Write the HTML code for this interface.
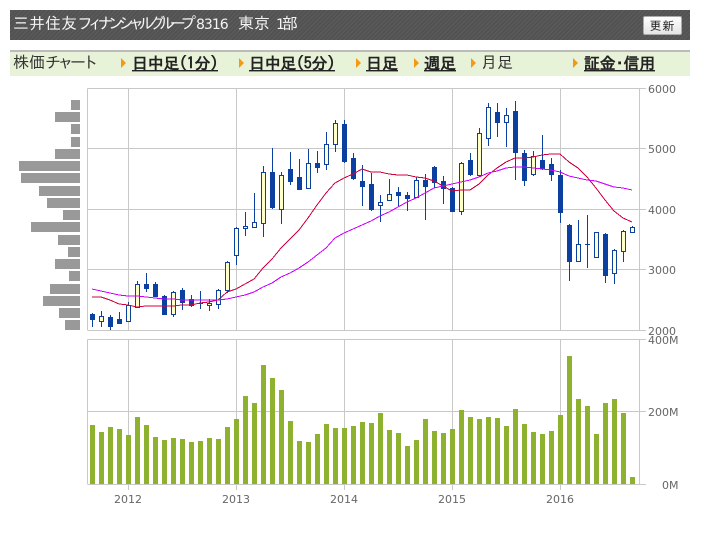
<!DOCTYPE html>
<html lang="ja"><head><meta charset="utf-8"><style>
html,body{margin:0;padding:0;background:#fff;width:702px;height:533px;overflow:hidden}
#w{position:relative;width:702px;height:533px;font-family:"Liberation Sans","IPAGothic","Noto Sans CJK JP",sans-serif}
.a{position:absolute;white-space:nowrap;line-height:1}
#hd{position:absolute;left:10px;top:10px;width:680px;height:30px;background:repeating-linear-gradient(135deg,#525252 0,#525252 2px,#5c5c5c 2px,#5c5c5c 3px)}
#nv{position:absolute;left:10px;top:50px;width:680px;height:24px;background:#e8f2d8;border-top:2px solid #bbb}
.t{color:#f4f4f4;font-size:16px;top:17px}
.n{color:#333;font-size:16px}
.l{color:#222;font-family:"IPAGothic","Noto Sans CJK JP",sans-serif;font-size:16px;font-weight:bold;top:55px;border-bottom:1px solid #222;box-shadow:0 1px 0 #999;height:15px}
.r{position:absolute;width:0;height:0;border-left:5px solid #f39a12;border-top:5px solid transparent;border-bottom:5px solid transparent;top:58px}
#b{position:absolute;left:643px;top:16px;width:37px;height:17px;border:1px solid #aaa;border-radius:2px;background:linear-gradient(#fff,#e4e4e4);color:#222;font-size:12px;line-height:18px;text-align:center;letter-spacing:1px}
svg{position:absolute;left:0;top:0}
svg text{font-family:"DejaVu Sans",sans-serif;font-size:11px;fill:#666}
</style></head><body><div id="w">
<div id="hd"></div>
<span class="a t" style="left:13px">三井住友</span>
<span class="a t" style="left:77px;letter-spacing:-5.7px">フィナンシャルグループ</span>
<span class="a t" style="left:196px;font-family:'DejaVu Sans',sans-serif;font-size:14px;top:18px;letter-spacing:-1px">8316</span>
<span class="a t" style="left:238px">東京</span>
<span class="a t" style="left:276px;font-family:'DejaVu Sans',sans-serif;font-size:14px;top:18px">1</span>
<span class="a t" style="left:282px">部</span>
<div id="b">更新</div>
<div id="nv"></div>
<span class="a n" style="left:13px;top:56px">株価</span>
<span class="a n" style="left:45px;top:56px;letter-spacing:-3.5px">チャート</span>
<i class="r" style="left:121px"></i><span class="a l" style="left:132px;letter-spacing:-.3px">日中足(1分)</span>
<i class="r" style="left:239px"></i><span class="a l" style="left:249px;letter-spacing:-.3px">日中足(5分)</span>
<i class="r" style="left:356px"></i><span class="a l" style="left:366px">日足</span>
<i class="r" style="left:414px"></i><span class="a l" style="left:424px">週足</span>
<i class="r" style="left:471px"></i><span class="a n" style="left:481px;top:56px">月足</span>
<i class="r" style="left:573px"></i><span class="a l" style="left:584px;letter-spacing:-.2px">証金･信用</span>
<svg id="s" width="702" height="533" viewBox="0 0 702 533" shape-rendering="crispEdges">
<g stroke="#c8c8c8" fill="none" stroke-width="1">
<path d="M87.5 88.5H646M87.5 148.5H646M87.5 209.5H646M87.5 269.5H646M87.5 330.5H646M87.5 88.5V330M128.5 88.5V330M236.5 88.5V330M344.5 88.5V330M452.5 88.5V330M560.5 88.5V330M639.5 88.5V330"/>
<path d="M87.5 339.5H646M87.5 411.5H646M87.5 484.5H646M87.5 339.5V484M128.5 339.5V490M236.5 339.5V490M344.5 339.5V490M452.5 339.5V490M560.5 339.5V490M639.5 339.5V484"/>
</g>
<g fill="#999">
<rect x="71" y="100" width="9" height="10"/><rect x="55" y="112" width="25" height="10"/><rect x="71" y="124" width="9" height="10"/><rect x="71" y="137" width="9" height="10"/><rect x="55" y="149" width="25" height="10"/><rect x="19" y="161" width="61" height="10"/><rect x="21" y="173" width="59" height="10"/><rect x="39" y="186" width="41" height="10"/><rect x="47" y="198" width="33" height="10"/><rect x="63" y="210" width="17" height="10"/><rect x="31" y="222" width="49" height="10"/><rect x="58" y="235" width="22" height="10"/><rect x="68" y="247" width="12" height="10"/><rect x="55" y="259" width="25" height="10"/><rect x="69" y="271" width="11" height="10"/><rect x="50" y="284" width="30" height="10"/><rect x="43" y="296" width="37" height="10"/><rect x="59" y="308" width="21" height="10"/><rect x="65" y="320" width="15" height="10"/>
</g>
<g id="v" fill="#8eb230">
<rect x="90" y="425" width="5" height="59"/><rect x="99" y="432" width="5" height="52"/><rect x="108" y="427" width="5" height="57"/><rect x="117" y="429" width="5" height="55"/><rect x="126" y="435" width="5" height="49"/><rect x="135" y="417" width="5" height="67"/><rect x="144" y="425" width="5" height="59"/><rect x="153" y="437" width="5" height="47"/><rect x="162" y="440" width="5" height="44"/><rect x="171" y="438" width="5" height="46"/><rect x="180" y="439" width="5" height="45"/><rect x="189" y="442" width="5" height="42"/><rect x="198" y="441" width="5" height="43"/><rect x="207" y="438" width="5" height="46"/><rect x="216" y="439" width="5" height="45"/><rect x="225" y="427" width="5" height="57"/><rect x="234" y="419" width="5" height="65"/><rect x="243" y="396" width="5" height="88"/><rect x="252" y="403" width="5" height="81"/><rect x="261" y="365" width="5" height="119"/><rect x="270" y="378" width="5" height="106"/><rect x="279" y="390" width="5" height="94"/><rect x="288" y="421" width="5" height="63"/><rect x="297" y="441" width="5" height="43"/><rect x="306" y="442" width="5" height="42"/><rect x="315" y="434" width="5" height="50"/><rect x="324" y="424" width="5" height="60"/><rect x="333" y="428" width="5" height="56"/><rect x="342" y="428" width="5" height="56"/><rect x="351" y="426" width="5" height="58"/><rect x="360" y="422" width="5" height="62"/><rect x="369" y="423" width="5" height="61"/><rect x="378" y="413" width="5" height="71"/><rect x="387" y="430" width="5" height="54"/><rect x="396" y="433" width="5" height="51"/><rect x="405" y="446" width="5" height="38"/><rect x="414" y="440" width="5" height="44"/><rect x="423" y="419" width="5" height="65"/><rect x="432" y="431" width="5" height="53"/><rect x="441" y="433" width="5" height="51"/><rect x="450" y="429" width="5" height="55"/><rect x="459" y="410" width="5" height="74"/><rect x="468" y="417" width="5" height="67"/><rect x="477" y="419" width="5" height="65"/><rect x="486" y="417" width="5" height="67"/><rect x="495" y="418" width="5" height="66"/><rect x="504" y="426" width="5" height="58"/><rect x="513" y="409" width="5" height="75"/><rect x="522" y="424" width="5" height="60"/><rect x="531" y="432" width="5" height="52"/><rect x="540" y="434" width="5" height="50"/><rect x="549" y="431" width="5" height="53"/><rect x="558" y="415" width="5" height="69"/><rect x="567" y="356" width="5" height="128"/><rect x="576" y="399" width="5" height="85"/><rect x="585" y="406" width="5" height="78"/><rect x="594" y="434" width="5" height="50"/><rect x="603" y="403" width="5" height="81"/><rect x="612" y="399" width="5" height="85"/><rect x="621" y="413" width="5" height="71"/><rect x="630" y="477" width="5" height="7"/>
</g>
<g id="c" fill="none" stroke="#0b3fa0" stroke-width="1"></g>
<g fill="none" stroke-width="1">
<polyline stroke="#d0003c" points="92,297 101,297 110,300 119,304 128,305 137,307 146,306 155,306 164,306 173,306 182,305 191,305 200,303 209,302 218,300 227,292 236,289 245,284 254,279 263,268 272,259 281,248 290,239 299,230 308,218 317,205 326,193 335,183 344,178 353,174 362,169 371,172 380,172 389,174 398,175 407,175 416,177 425,178 434,181 443,186 452,191 461,190 470,190 479,184 488,175 497,168 506,162 515,158 524,158 533,157 542,155 551,154 560,154 569,162 578,168 587,177 596,188 605,200 614,211 623,218 632,222"/>
<polyline stroke="#cc00ff" points="92,289 101,291 110,293 119,295 128,296 137,296 146,297 155,298 164,299 173,299 182,300 191,300 200,300 209,300 218,300 227,299 236,297 245,295 254,292 263,287 272,283 281,277 290,273 299,268 308,262 317,255 326,248 335,238 344,233 353,229 362,225 371,221 380,216 389,212 398,207 407,202 416,198 425,193 434,188 443,186 452,184 461,182 470,180 479,177 488,173 497,171 506,168 515,167 524,167 533,168 542,169 551,170 560,172 569,176 578,178 587,180 596,181 605,184 614,187 623,188 632,190"/>
</g>
<g shape-rendering="auto">
<text x="648" y="93">6000</text><text x="648" y="153">5000</text><text x="648" y="214">4000</text><text x="648" y="274">3000</text><text x="648" y="335">2000</text>
<text x="648" y="344">400M</text><text x="648" y="416">200M</text><text x="662" y="489">0M</text>
<text x="114" y="503">2012</text><text x="222" y="503">2013</text><text x="330" y="503">2014</text><text x="438" y="503">2015</text><text x="546" y="503">2016</text>
</g>
</svg>
<script>
var D=[[0,687,701,684,725],[1,694,709,678,725],[0,696,722,690,734],[0,702,713,681,716],[1,659,709,652,709],[1,598,665,589,668],[0,597,608,564,620],[0,597,632,591,632],[0,633,686,630,689],[1,622,688,618,695],[0,615,650,609,674],[0,642,660,630,665],[2,655,655,618,671],[1,654,661,642,677],[1,616,658,612,671],[1,532,616,529,623],[1,430,511,427,539],[1,424,430,381,452],[1,412,427,324,430],[1,262,415,243,455],[0,261,365,189,371],[1,271,373,262,416],[0,252,287,201,299],[0,276,311,222,314],[1,235,310,192,310],[0,234,245,198,263],[1,178,238,141,254],[1,115,178,105,200],[0,117,227,105,233],[0,219,278,204,284],[0,288,302,240,362],[0,297,371,264,378],[1,352,361,330,410],[1,328,346,282,346],[0,321,329,306,367],[0,330,338,321,377],[1,286,337,276,338],[0,285,302,267,404],[0,246,290,243,309],[0,288,308,273,356],[0,309,377,306,379],[1,235,379,230,389],[0,225,267,204,272],[1,145,271,129,275],[1,67,160,54,183],[0,81,110,54,155],[1,91,112,69,186],[0,78,200,48,285],[0,204,285,195,303],[1,214,268,198,273],[0,225,250,150,255],[0,237,266,219,288],[0,270,380,255,413],[0,420,527,417,588],[1,478,527,405,530],[2,478,478,390,549],[1,442,517,442,517],[0,447,569,444,594],[1,496,565,492,597],[1,439,499,435,531],[1,427,442,423,442]];
var h='',Y=function(z){return Math.round(85+z/3)};
D.forEach(function(d,i){var x=92+9*i,t=Y(d[1]),b=Y(d[2]),u=Y(d[3]),l=Y(d[4]);
h+='<path d="M'+(x+.5)+' '+u+'V'+l+'"/>';
if(d[0]==2)h+='<path d="M'+(x-2)+' '+(t+.5)+'H'+(x+3)+'"/>';
else h+='<rect x="'+(x-2+.5)+'" y="'+(t+.5)+'" width="4" height="'+Math.max(b-t,2)+'" fill="'+(d[0]?'#ffffc8':'#0b3fa0')+'"/>';});
document.getElementById('c').innerHTML=h;
</script>
</div></body></html>
